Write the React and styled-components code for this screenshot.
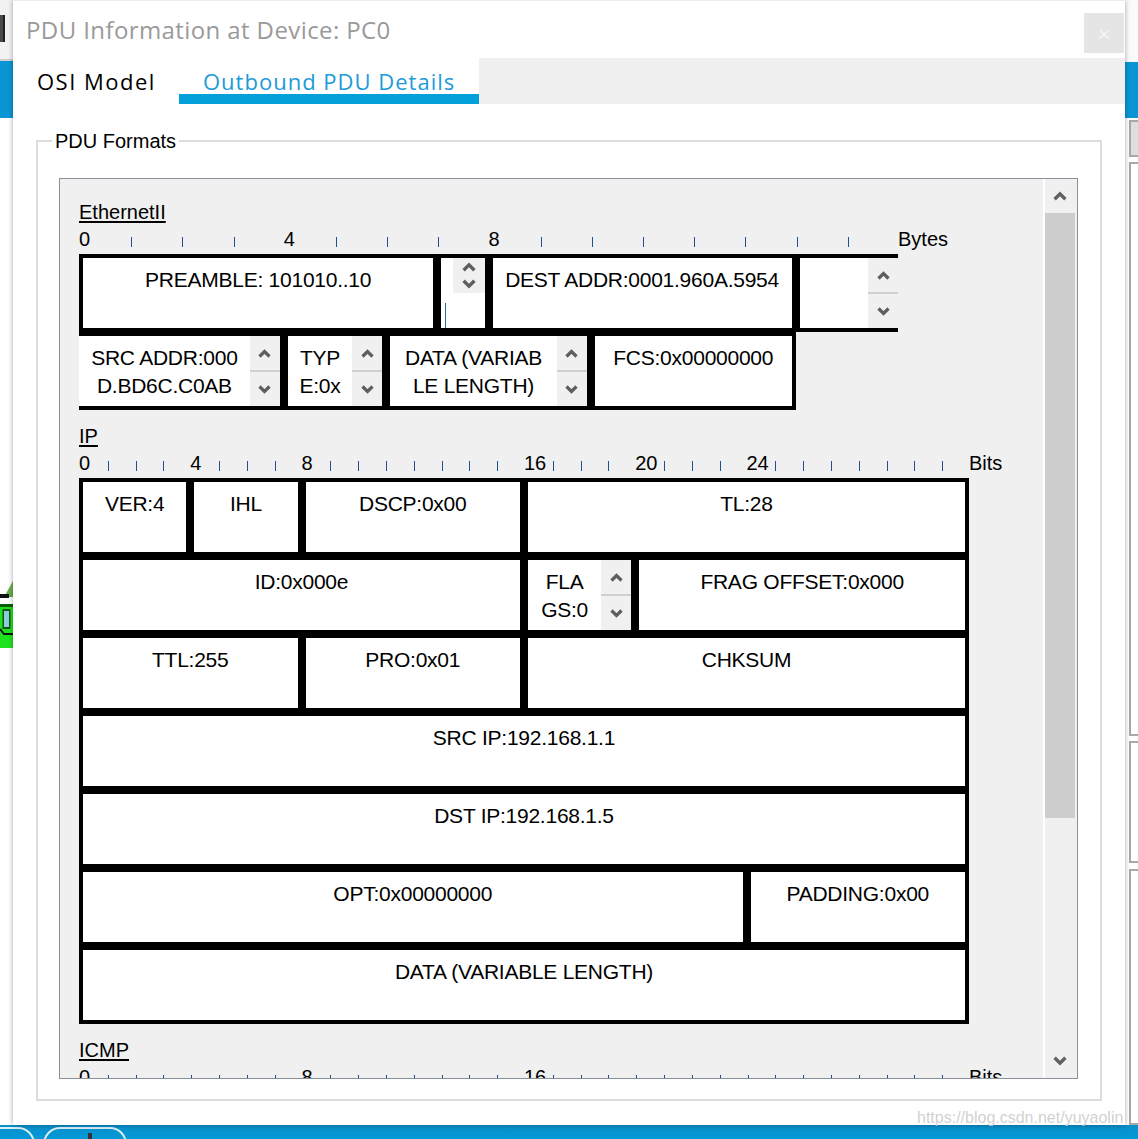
import React from "react";
import styled, { createGlobalStyle } from "styled-components";

const UI_FONT = `"Open Sans", "Noto Sans", sans-serif`;
const JAVA_FONT = `"Liberation Sans", Arial, sans-serif`;

const ETH_UNIT = 819 / 16;
const IP_UNIT = 890 / 32;

const GlobalStyle = createGlobalStyle`
  html, body {
    margin: 0;
    padding: 0;
    background: #fff;
  }
  body {
    width: 1138px;
    height: 1139px;
    overflow: hidden;
  }
  * {
    box-sizing: border-box;
  }
`;

const Screen = styled.div`
  position: relative;
  width: 1138px;
  height: 1139px;
  overflow: hidden;
  display: flex;
  flex-direction: column;
  background: #fafafa;
`;

const Desk = styled.div`
  display: flex;
  height: 1125px;
`;

/* ---------- background application strips ---------- */

const SideStrip = styled.div`
  width: 13px;
  flex: 0 0 13px;
  display: flex;
  flex-direction: column;
  background: #fff;
`;

const StripTop = styled.div`
  height: ${(p) => (p.$plain ? 63 : 61)}px;
  background: ${(p) => (p.$plain ? "#fafafa" : "#f2f2f2")};
  border-bottom: ${(p) => (p.$plain ? "none" : "2px solid #cfcfcf")};
  padding-top: 15px;
`;

const DarkIcon = styled.div`
  width: 5px;
  height: 27px;
  background: #4a4a4a;
  border-right: 2px solid #222;
`;

const StripBlue = styled.div`
  height: 57px;
  background: #0a96d4;
`;

const GreenIcon = styled.svg`
  display: block;
  margin-top: 463px;
`;

const RightBox = styled.div`
  margin-left: 4px;
  margin-top: ${(p) => p.$gap}px;
  height: ${(p) => p.$h}px;
  border: 2px solid #a8a8a8;
  border-right: none;
  background: ${(p) => p.$bg || "#fff"};
`;

const Taskbar = styled.div`
  flex: 1;
  display: flex;
  gap: 8px;
  padding-top: 2px;
  background: linear-gradient(#0a8fcb, #0399d8);
  overflow: hidden;
`;

const TaskPill = styled.div`
  width: ${(p) => p.$w}px;
  height: 34px;
  margin-left: ${(p) => p.$ml || 0}px;
  border: 2px solid rgba(255, 255, 255, 0.85);
  border-radius: 20px;
  display: flex;
  justify-content: center;
  padding-top: 4px;
`;

const PillMark = styled.div`
  width: 4px;
  height: 10px;
  margin-left: 10px;
  background: #333;
`;

const Watermark = styled.div`
  position: absolute;
  z-index: 5;
  left: 917px;
  top: 1108px;
  font-family: ${JAVA_FONT};
  font-size: 16px;
  line-height: 20px;
  color: rgba(200, 200, 200, 0.85);
  white-space: nowrap;
`;

/* ---------- dialog ---------- */

const Dialog = styled.div`
  position: relative;
  z-index: 1;
  width: 1112px;
  flex: 0 0 1112px;
  display: flex;
  flex-direction: column;
  background: #fff;
  border-top: 1px solid #ededed;
  box-shadow: 0 0 5px rgba(0, 0, 0, 0.35);
`;

const TitleRow = styled.div`
  height: 57px;
  display: flex;
  justify-content: space-between;
  align-items: flex-start;
  padding-left: 13px;
`;

const Title = styled.div`
  margin-top: 13px;
  font-family: ${UI_FONT};
  font-size: 24px;
  line-height: 32px;
  letter-spacing: 0.4px;
  color: #9a9a9a;
`;

const CloseButton = styled.div`
  width: 40px;
  height: 40px;
  margin-top: 12px;
  margin-right: 1px;
  display: flex;
  align-items: center;
  justify-content: center;
  background: #e5e5e5;
  color: #f4f4f4;
  font-family: ${UI_FONT};
  font-size: 22px;
`;

const TabBar = styled.div`
  height: 46px;
  display: flex;
`;

const Tab = styled.div`
  width: ${(p) => p.$w}px;
  padding: 8px 0 0 24px;
  font-family: ${UI_FONT};
  font-size: 22px;
  line-height: 30px;
  letter-spacing: ${(p) => (p.$active ? 1 : 1.5)}px;
  white-space: nowrap;
  color: ${(p) => (p.$active ? "#1b9bd6" : "#000")};
  background: #fff;
  box-shadow: ${(p) => (p.$active ? "inset 0 -10px 0 #04a0d9" : "none")};
`;

const TabFill = styled.div`
  flex: 1;
  background: #f0f0f0;
`;

const Body = styled.div`
  padding: 36px 23px 24px 23px;
`;

const Group = styled.div`
  position: relative;
  border: 2px solid #dcdcdc;
  padding: 36px 22px 20px 21px;
`;

const Legend = styled.div`
  position: absolute;
  top: -14px;
  left: 14px;
  padding: 0 3px;
  background: #fff;
  font-family: ${JAVA_FONT};
  font-size: 20px;
  line-height: 26px;
  color: #000;
`;

const Pane = styled.div`
  height: 901px;
  display: flex;
  border: 1px solid #8a9099;
  background: #f0f0f0;
  overflow: hidden;
`;

const Content = styled.div`
  flex: 1;
  min-width: 0;
  padding: 22px 0 0 19px;
  overflow: hidden;
`;

const PaneDivider = styled.div`
  width: 2px;
  background: #fff;
`;

const ScrollBar = styled.div`
  width: 30px;
  margin-right: 2px;
  display: flex;
  flex-direction: column;
`;

const ScrollButton = styled.div`
  height: 34px;
  display: flex;
  align-items: center;
  justify-content: center;
`;

const Thumb = styled.div`
  height: 605px;
  background: #cdcdcd;
`;

const Track = styled.div`
  flex: 1;
`;

/* ---------- PDU diagrams ---------- */

const Section = styled.div`
  margin-top: ${(p) => (p.$first ? 0 : 15)}px;
`;

const SectionTitle = styled.div`
  font-family: ${JAVA_FONT};
  font-size: 20px;
  line-height: 22px;
  color: #000;
  text-decoration: underline;
  text-decoration-thickness: 2px;
  text-underline-offset: 2px;
`;

const Ruler = styled.div`
  height: 31px;
  display: flex;
  align-items: flex-end;
  padding-bottom: 5px;
`;

const RulerCell = styled.div`
  flex: 0 0 ${(p) => p.$w}px;
  display: flex;
  align-items: flex-end;
`;

const RulerLabel = styled.span`
  font-family: ${JAVA_FONT};
  font-size: 20px;
  line-height: 18px;
  margin-bottom: 1px;
  white-space: nowrap;
  color: #000;
`;

const Tick = styled.span`
  width: 1px;
  height: 10px;
  margin: 0 0 2px 1px;
  background: #21508f;
`;

const FieldRow = styled.div`
  display: flex;
`;

const Field = styled.div`
  width: ${(p) => p.$w}px;
  height: 78px;
  display: flex;
  background: #fff;
  border: 4px solid #000;
  border-left-width: ${(p) => (p.$openLeft ? 0 : 4)}px;
  border-right-width: ${(p) => (p.$openRight ? 0 : 4)}px;
`;

const FieldText = styled.div`
  flex: 1;
  min-width: 0;
  padding-top: 8px;
  font-family: ${JAVA_FONT};
  font-size: 21px;
  line-height: 28px;
  letter-spacing: -0.25px;
  text-align: center;
  white-space: nowrap;
  overflow: hidden;
  color: #000;
`;

const Caret = styled.div`
  width: 1px;
  height: 30px;
  margin: 37px 0 0 4px;
  background: #2a66b0;
`;

const Spinner = styled.div`
  width: ${(p) => (p.$mini ? 32 : 30)}px;
  height: ${(p) => (p.$mini ? "35px" : "auto")};
  display: flex;
  flex-direction: column;
  background: #f0f0f0;
`;

const SpinButton = styled.div`
  flex: 1;
  display: flex;
  align-items: center;
  justify-content: center;
`;

const SpinDivider = styled.div`
  height: 2px;
  background: #d0d0d0;
`;

const Chevron = ({ down, w = 13, h = 9, color = "#5e5e5e" }) => (
  <svg width={w} height={h} viewBox="0 0 13 9">
    <polyline
      points={down ? "1.5,1.5 6.5,6.5 11.5,1.5" : "1.5,7.5 6.5,2.5 11.5,7.5"}
      fill="none"
      stroke={color}
      strokeWidth="3.2"
    />
  </svg>
);

const Spin = ({ mini }) => (
  <Spinner $mini={mini}>
    <SpinButton>
      <Chevron w={mini ? 14 : 13} h={mini ? 10 : 9} />
    </SpinButton>
    {!mini && <SpinDivider />}
    <SpinButton>
      <Chevron down w={mini ? 14 : 13} h={mini ? 10 : 9} />
    </SpinButton>
  </Spinner>
);

const PduField = ({ f, unit }) => (
  <Field $w={f.n * unit} $openLeft={f.openLeft} $openRight={f.openRight}>
    {f.caret ? (
      <FieldText>
        <Caret />
      </FieldText>
    ) : (
      <FieldText>
        {(f.lines || []).map((l) => (
          <div key={l}>{l}</div>
        ))}
      </FieldText>
    )}
    {f.spin && <Spin mini={f.spin === "mini"} />}
  </Field>
);

const PduRuler = ({ unit, count, labels, end }) => (
  <Ruler>
    {Array.from({ length: count }, (_, i) => (
      <RulerCell key={i} $w={unit}>
        {labels.includes(i) ? <RulerLabel>{i}</RulerLabel> : <Tick />}
      </RulerCell>
    ))}
    <RulerCell $w={unit}>
      <RulerLabel>{end}</RulerLabel>
    </RulerCell>
  </Ruler>
);

const PduSection = ({ title, unit, count, labels, end, rows, first }) => (
  <Section $first={first}>
    <SectionTitle>{title}</SectionTitle>
    <PduRuler unit={unit} count={count} labels={labels} end={end} />
    {rows.map((row, r) => (
      <FieldRow key={r}>
        {row.map((f, i) => (
          <PduField key={i} f={f} unit={unit} />
        ))}
      </FieldRow>
    ))}
  </Section>
);

const ethernetRows = [
  [
    { n: 7, lines: ["PREAMBLE: 101010..10"] },
    { n: 1, caret: true, spin: "mini" },
    { n: 6, lines: ["DEST ADDR:0001.960A.5954"] },
    { n: 2, lines: [], spin: true, openRight: true },
  ],
  [
    { n: 4, lines: ["SRC ADDR:000", "D.BD6C.C0AB"], spin: true, openLeft: true },
    { n: 2, lines: ["TYP", "E:0x"], spin: true },
    { n: 4, lines: ["DATA (VARIAB", "LE LENGTH)"], spin: true },
    { n: 4, lines: ["FCS:0x00000000"] },
  ],
];

const ipRows = [
  [
    { n: 4, lines: ["VER:4"] },
    { n: 4, lines: ["IHL"] },
    { n: 8, lines: ["DSCP:0x00"] },
    { n: 16, lines: ["TL:28"] },
  ],
  [
    { n: 16, lines: ["ID:0x000e"] },
    { n: 4, lines: ["FLA", "GS:0"], spin: true },
    { n: 12, lines: ["FRAG OFFSET:0x000"] },
  ],
  [
    { n: 8, lines: ["TTL:255"] },
    { n: 8, lines: ["PRO:0x01"] },
    { n: 16, lines: ["CHKSUM"] },
  ],
  [{ n: 32, lines: ["SRC IP:192.168.1.1"] }],
  [{ n: 32, lines: ["DST IP:192.168.1.5"] }],
  [
    { n: 24, lines: ["OPT:0x00000000"] },
    { n: 8, lines: ["PADDING:0x00"] },
  ],
  [{ n: 32, lines: ["DATA (VARIABLE LENGTH)"] }],
];

const icmpRows = [
  [
    { n: 8, lines: ["TYPE:0x08"] },
    { n: 8, lines: ["CODE:0x00"] },
    { n: 16, lines: ["CHECKSUM"] },
  ],
];

const App = () => {
  return (
    <>
      <GlobalStyle />
      <Screen>
        <Desk>
          <SideStrip>
            <StripTop>
              <DarkIcon />
            </StripTop>
            <StripBlue />
            <GreenIcon width="13" height="70" viewBox="0 0 13 70">
              <polygon points="13,0 4,16 13,16" fill="#6aae4c" />
              <rect x="0" y="13" width="9" height="4" fill="#111" />
              <rect x="0" y="23" width="13" height="44" fill="#1ee21e" />
              <rect x="0" y="23" width="13" height="3" fill="#0c5a0c" />
              <rect x="2.5" y="28" width="8" height="20" fill="#0c5a0c" />
              <rect x="4" y="30" width="5" height="16" fill="#8fcbe0" />
              <polyline points="0,48 4,53 13,53" fill="none" stroke="#111" strokeWidth="2" />
            </GreenIcon>
          </SideStrip>

          <Dialog>
            <TitleRow>
              <Title>PDU Information at Device: PC0</Title>
              <CloseButton>×</CloseButton>
            </TitleRow>

            <TabBar>
              <Tab $w={166}>OSI Model</Tab>
              <Tab $w={300} $active>
                Outbound PDU Details
              </Tab>
              <TabFill />
            </TabBar>

            <Body>
              <Group>
                <Legend>PDU Formats</Legend>
                <Pane>
                  <Content>
                    <PduSection
                      first
                      title="EthernetII"
                      unit={ETH_UNIT}
                      count={16}
                      labels={[0, 4, 8]}
                      end="Bytes"
                      rows={ethernetRows}
                    />
                    <PduSection
                      title="IP"
                      unit={IP_UNIT}
                      count={32}
                      labels={[0, 4, 8, 16, 20, 24]}
                      end="Bits"
                      rows={ipRows}
                    />
                    <PduSection
                      title="ICMP"
                      unit={IP_UNIT}
                      count={32}
                      labels={[0, 8, 16]}
                      end="Bits"
                      rows={icmpRows}
                    />
                  </Content>
                  <PaneDivider />
                  <ScrollBar>
                    <ScrollButton>
                      <Chevron w={14} h={10} color="#606060" />
                    </ScrollButton>
                    <Thumb />
                    <Track />
                    <ScrollButton>
                      <Chevron down w={14} h={10} color="#606060" />
                    </ScrollButton>
                  </ScrollBar>
                </Pane>
              </Group>
            </Body>
          </Dialog>

          <SideStrip>
            <StripTop $plain />
            <StripBlue />
            <RightBox $gap={2} $h={37} $bg="#dedede" />
            <RightBox $gap={5} $h={584} />
            <RightBox $gap={5} $h={125} />
            <RightBox $gap={6} $h={260} />
          </SideStrip>
        </Desk>

        <Taskbar>
          <TaskPill $w={55} $ml={-20} />
          <TaskPill $w={84}>
            <PillMark />
          </TaskPill>
        </Taskbar>

        <Watermark>https://blog.csdn.net/yuyaolin</Watermark>
      </Screen>
    </>
  );
};

export default App;
